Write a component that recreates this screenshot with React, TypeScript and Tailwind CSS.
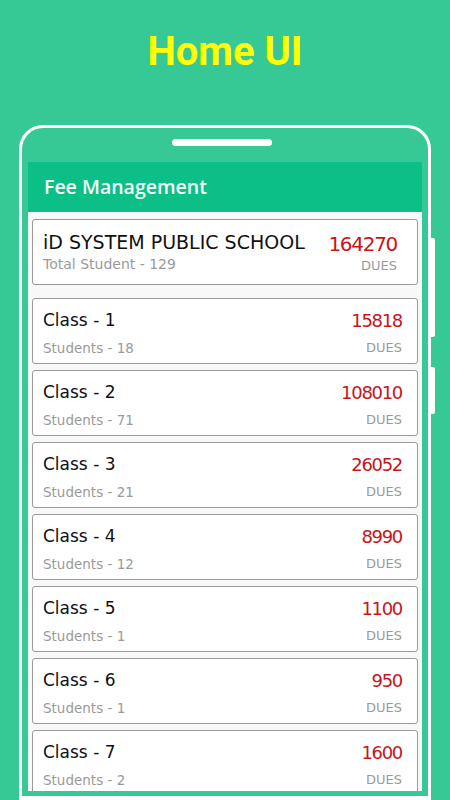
import React from 'react'

const classes = [
  { name: 'Class - 1', students: 18, dues: 15818 },
  { name: 'Class - 2', students: 71, dues: 108010 },
  { name: 'Class - 3', students: 21, dues: 26052 },
  { name: 'Class - 4', students: 12, dues: 8990 },
  { name: 'Class - 5', students: 1, dues: 1100 },
  { name: 'Class - 6', students: 1, dues: 950 },
  { name: 'Class - 7', students: 2, dues: 1600 },
]

const cardFont = { fontFamily: '"DejaVu Sans", "Noto Sans", sans-serif' }

function ClassCard({ name, students, dues }: { name: string; students: number; dues: number }) {
  return (
    <div className="h-[66px] shrink-0 rounded-[3px] border border-[#9a9a9a] bg-white pl-[10px] pr-[15px] pt-[11px] flex justify-between">
      <div className="flex flex-col">
        <span className="text-[17px] leading-[21px] text-[#111]">{name}</span>
        <span className="mt-[9px] text-[13.5px] leading-[16px] text-[#9a9a9a]">Students - {students}</span>
      </div>
      <div className="flex flex-col items-end">
        <span className="text-[18px] leading-[21px] tracking-[-1.3px] text-[#c8141b]">{dues}</span>
        <span className="mt-[9px] text-[13px] leading-[16px] text-[#9a9a9a]">DUES</span>
      </div>
    </div>
  )
}

export default function App() {
  return (
    <div className="w-[450px] h-[800px] overflow-hidden bg-[#36c996] flex flex-col">
      <h1
        className="mt-[28px] h-[48px] text-center text-[40px] leading-[48px] font-bold text-[#ffff00]"
        style={{ fontFamily: 'Roboto, "Noto Sans", sans-serif' }}
      >
        Home UI
      </h1>

      {/* phone */}
      <div className="relative ml-[19px] mt-[49px] w-[412px] flex-1 rounded-t-[24px] border-x-[3px] border-t-[3px] border-white flex flex-col">
        {/* side buttons */}
        <div className="absolute right-[-7px] top-[110px] h-[99px] w-[4px] rounded-r-[2px] bg-white" />
        <div className="absolute right-[-7px] top-[239px] h-[47px] w-[4px] rounded-r-[2px] bg-white" />

        <div className="ml-[150px] mt-[11px] h-[7px] w-[100px] rounded-full bg-white" />

        <div className="mx-[6px] mt-[16px] flex flex-col bg-[#f8f8f8]" style={cardFont}>
          <div className="h-[50px] bg-[#0bbf87] pl-[16px] flex items-center">
            <span
              className="text-[19.5px] font-semibold text-[#f4fff9]"
              style={{ fontFamily: '"Open Sans", "Noto Sans", sans-serif' }}
            >
              Fee Management
            </span>
          </div>

          <div className="h-[579px] overflow-hidden px-[4px] pt-[7px] flex flex-col gap-[6px]">
            <div className="mb-[7px] h-[66px] shrink-0 rounded-[3px] border border-[#9a9a9a] bg-white pl-[10px] pr-[20px] pt-[11px] flex justify-between">
              <div className="flex flex-col">
                <span className="text-[19px] leading-[22px] text-[#111]">iD SYSTEM PUBLIC SCHOOL</span>
                <span className="mt-[3px] text-[14px] leading-[16px] text-[#9a9a9a]">Total Student - 129</span>
              </div>
              <div className="flex flex-col items-end">
                <span className="mt-[2px] text-[20px] leading-[22px] tracking-[-1.3px] text-[#c8141b]">164270</span>
                <span className="mt-[3px] text-[13px] leading-[16px] text-[#9a9a9a]">DUES</span>
              </div>
            </div>
            {classes.map((c) => (
              <ClassCard key={c.name} {...c} />
            ))}
          </div>
        </div>
        <div className="mt-[5px] flex-1 bg-white" />
      </div>
    </div>
  )
}
